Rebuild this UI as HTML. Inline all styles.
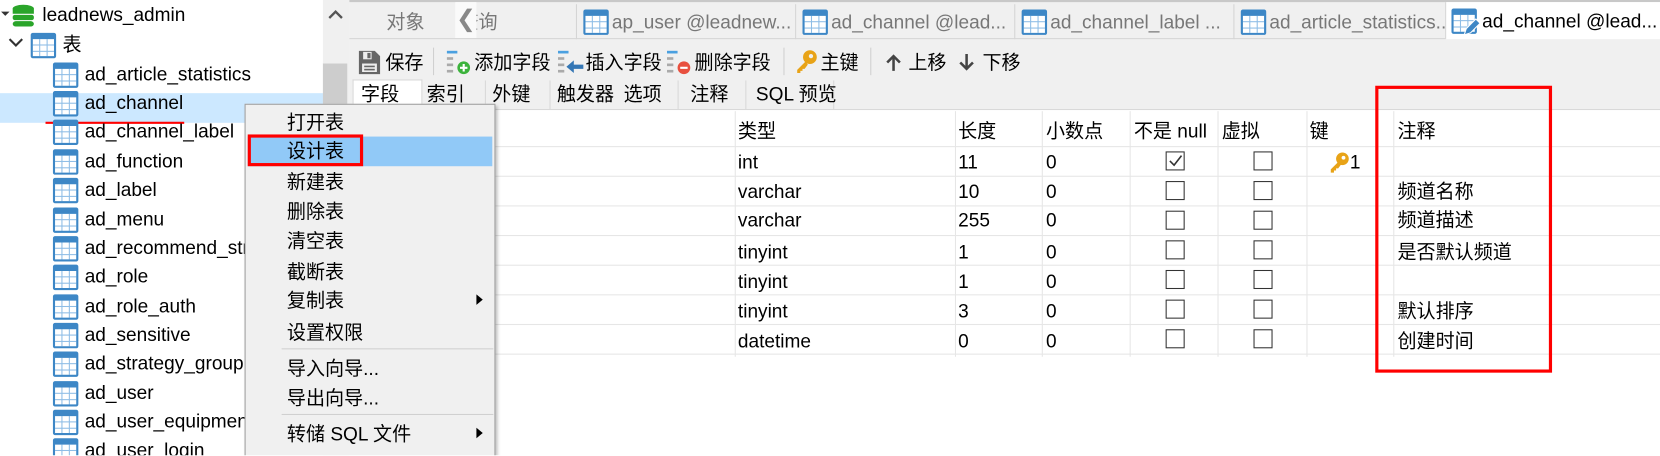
<!DOCTYPE html>
<html><head><meta charset="utf-8">
<style>
*{margin:0;padding:0;box-sizing:border-box}
html,body{width:1660px;height:456px;overflow:hidden;background:#fff}
#w{position:absolute;left:0;top:0;width:1568px;height:430px;transform:scale(1.0587);transform-origin:0 0;font-family:"Liberation Sans","Noto Sans CJK SC",sans-serif;font-size:18px;color:#000;overflow:hidden}
.a{position:absolute;white-space:nowrap}
.t{line-height:20px}
.ti{position:absolute;width:24px;height:24px;border:2px solid #3d87c6;border-top-width:6px;border-radius:2px;background:
linear-gradient(#8ebde6,#8ebde6) 6px 0/1px 100% no-repeat,
linear-gradient(#8ebde6,#8ebde6) 13px 0/1px 100% no-repeat,
linear-gradient(#8ebde6,#8ebde6) 0 5px/100% 1px no-repeat,
linear-gradient(#8ebde6,#8ebde6) 0 11px/100% 1px no-repeat,#fff}
.cb{position:absolute;width:18px;height:18px;border:1.5px solid #333;background:#fff}
.vl{position:absolute;width:1px;background:#e6e6e6;top:105px;height:232px}
.hl{position:absolute;height:1px;background:#e6e6e6;left:333px;right:0}
.mi{position:absolute;left:271px;line-height:20px}
.tab{position:absolute;top:4px;height:33px;border-left:1px solid #d5d5d5;color:#777}
</style></head><body><div id="w">
<div class="a" style="left:0;top:88px;width:322px;height:28px;background:#cce8ff"></div>
<svg class="a" style="left:0;top:3px" width="34" height="24"><path d="M1 8 l4 4 l4-4" fill="#333"/><g fill="#2aa52a"><ellipse cx="22" cy="5" rx="10" ry="3.5"/><rect x="12" y="5" width="20" height="5"/><rect x="12" y="11" width="20" height="5" rx="2"/><rect x="12" y="17" width="20" height="5" rx="3"/></g></svg>
<div class="a t" style="left:40px;top:4px">leadnews_admin</div>
<svg class="a" style="left:8px;top:34px" width="14" height="12"><path d="M1 3 l6 6 l6-6" stroke="#333" stroke-width="2" fill="none"/></svg>
<div class="ti" style="left:29px;top:31px"></div>
<div class="a t" style="left:59px;top:32px">表</div>
<div class="ti" style="left:50px;top:59px"></div><div class="a t" style="left:80px;top:60px">ad_article_statistics</div>
<div class="ti" style="left:50px;top:86px"></div><div class="a t" style="left:80px;top:87px">ad_channel</div>
<div class="a" style="left:43px;top:115px;width:131px;height:2px;background:#f00"></div>
<div class="ti" style="left:50px;top:113px"></div><div class="a t" style="left:80px;top:114px">ad_channel_label</div>
<div class="ti" style="left:50px;top:141px"></div><div class="a t" style="left:80px;top:142px">ad_function</div>
<div class="ti" style="left:50px;top:168px"></div><div class="a t" style="left:80px;top:169px">ad_label</div>
<div class="ti" style="left:50px;top:196px"></div><div class="a t" style="left:80px;top:197px">ad_menu</div>
<div class="ti" style="left:50px;top:223px"></div><div class="a t" style="left:80px;top:224px">ad_recommend_strategy</div>
<div class="ti" style="left:50px;top:250px"></div><div class="a t" style="left:80px;top:251px">ad_role</div>
<div class="ti" style="left:50px;top:278px"></div><div class="a t" style="left:80px;top:279px">ad_role_auth</div>
<div class="ti" style="left:50px;top:305px"></div><div class="a t" style="left:80px;top:306px">ad_sensitive</div>
<div class="ti" style="left:50px;top:332px"></div><div class="a t" style="left:80px;top:333px">ad_strategy_group</div>
<div class="ti" style="left:50px;top:360px"></div><div class="a t" style="left:80px;top:361px">ad_user</div>
<div class="ti" style="left:50px;top:387px"></div><div class="a t" style="left:80px;top:388px">ad_user_equipment</div>
<div class="ti" style="left:50px;top:414px"></div><div class="a t" style="left:80px;top:415px">ad_user_login</div>
<div class="a" style="left:305px;top:0;width:25px;height:430px;background:#f0f0f0"></div>
<svg class="a" style="left:309px;top:8px" width="16" height="12"><path d="M2 9 l6-6 l6 6" stroke="#555" stroke-width="2.2" fill="none"/></svg>
<div class="a" style="left:305px;top:60px;width:23px;height:45px;background:#cdcdcd"></div>
<div class="a" style="left:330px;top:0;width:1330px;height:105px;background:#f0f0f0"></div>
<div class="a" style="left:330px;top:0;width:1330px;height:2px;background:#c8c8c8"></div>
<div class="tab" style="left:330px;width:100px;border-left:none"><span class="a t" style="left:35px;top:7px">对象</span></div>
<div class="a t" style="left:434px;top:11px;color:#777">查询</div>
<div class="a" style="left:430px;top:2px;width:20px;height:34px;background:#fafafa;color:#888;font-size:22px;line-height:32px;text-align:center">❮</div>
<div class="tab" style="left:544px;width:207px"><div class="ti" style="left:6px;top:5px"></div><span class="a t" style="left:33px;top:7px">ap_user @leadnew...</span></div>
<div class="tab" style="left:751px;width:207px"><div class="ti" style="left:6px;top:5px"></div><span class="a t" style="left:33px;top:7px">ad_channel @lead...</span></div>
<div class="tab" style="left:958px;width:207px"><div class="ti" style="left:6px;top:5px"></div><span class="a t" style="left:33px;top:7px">ad_channel_label ...</span></div>
<div class="tab" style="left:1165px;width:200px"><div class="ti" style="left:6px;top:5px"></div><span class="a t" style="left:33px;top:7px">ad_article_statistics...</span></div>
<div class="a" style="left:1365px;top:2px;width:295px;height:35px;background:#fff;border-left:1px solid #d5d5d5"></div>
<div class="ti" style="left:1371px;top:8px"></div>
<svg class="a" style="left:1380px;top:16px" width="20" height="20"><path d="M3 17 l2-6 l9-9 l4 4 l-9 9z" fill="#3d87c6" stroke="#fff"/></svg>
<div class="a t" style="left:1400px;top:10px">ad_channel @lead...</div>
<div class="a" style="left:330px;top:36px;width:1035px;height:1px;background:#d5d5d5"></div>
<svg class="a" style="left:338px;top:47px" width="22" height="24"><path d="M1 1h15l5 5v17H1z" fill="#666"/><rect x="5" y="2" width="8" height="7" fill="#eee"/><rect x="9" y="3" width="3" height="5" fill="#666"/><rect x="4" y="13" width="14" height="8" fill="#eee"/><rect x="6" y="15" width="10" height="1.5" fill="#666"/><rect x="6" y="18" width="10" height="1.5" fill="#666"/></svg>
<div class="a t" style="left:364px;top:49px">保存</div>
<div class="a" style="left:409px;top:45px;width:1px;height:26px;background:#d0d0d0"></div>
<svg class="a" style="left:422px;top:47px" width="26" height="24"><rect x="0" y="1" width="10" height="2.5" fill="#4aa0e0"/><rect x="0" y="7" width="6" height="2.5" fill="#aaa"/><rect x="0" y="13" width="6" height="2.5" fill="#aaa"/><rect x="0" y="19" width="6" height="2.5" fill="#aaa"/><circle cx="16" cy="17" r="6" fill="#3cb33c"/><path d="M12.5 17h7M16 13.5v7" stroke="#fff" stroke-width="2"/></svg>
<div class="a t" style="left:448px;top:49px">添加字段</div>
<svg class="a" style="left:527px;top:47px" width="26" height="24"><rect x="0" y="1" width="10" height="2.5" fill="#4aa0e0"/><rect x="0" y="7" width="6" height="2.5" fill="#aaa"/><rect x="0" y="13" width="6" height="2.5" fill="#aaa"/><rect x="0" y="19" width="6" height="2.5" fill="#aaa"/><path d="M8 16 l7-6 v4 h9 v4 h-9 v4z" fill="#3577b5"/></svg>
<div class="a t" style="left:553px;top:49px">插入字段</div>
<svg class="a" style="left:630px;top:47px" width="26" height="24"><rect x="0" y="1" width="10" height="2.5" fill="#4aa0e0"/><rect x="0" y="7" width="6" height="2.5" fill="#aaa"/><rect x="0" y="13" width="6" height="2.5" fill="#aaa"/><rect x="0" y="19" width="6" height="2.5" fill="#aaa"/><circle cx="16" cy="17" r="6" fill="#e8503f"/><path d="M12.5 17h7" stroke="#fff" stroke-width="2"/></svg>
<div class="a t" style="left:656px;top:49px">删除字段</div>
<div class="a" style="left:740px;top:45px;width:1px;height:26px;background:#d0d0d0"></div>
<svg class="a" style="left:751px;top:46px" width="22" height="24"><circle cx="14" cy="8" r="6.5" fill="#e8a317"/><circle cx="15" cy="7" r="2" fill="#f0f0f0"/><path d="M10 12 l-8 8 v3 h3 v-2 h2 v-2 h2 l3-4z" fill="#e8a317"/></svg>
<div class="a t" style="left:775px;top:49px">主键</div>
<div class="a" style="left:822px;top:45px;width:1px;height:26px;background:#d0d0d0"></div>
<svg class="a" style="left:836px;top:50px" width="16" height="18"><path d="M8 17V3M2 9l6-6 6 6" stroke="#444" stroke-width="2.4" fill="none"/></svg>
<div class="a t" style="left:858px;top:49px">上移</div>
<svg class="a" style="left:905px;top:50px" width="16" height="18"><path d="M8 1v14M2 9l6 6 6-6" stroke="#444" stroke-width="2.4" fill="none"/></svg>
<div class="a t" style="left:928px;top:49px">下移</div>
<div class="a" style="left:333px;top:75px;width:66px;height:30px;background:#fff;border:1px solid #d8d8d8;border-bottom:none"></div>
<div class="a t" style="left:341px;top:79px">字段</div>
<div class="a" style="left:458px;top:76px;width:1px;height:27px;background:#d8d8d8"></div>
<div class="a" style="left:519px;top:76px;width:1px;height:27px;background:#d8d8d8"></div>
<div class="a" style="left:640px;top:76px;width:1px;height:27px;background:#d8d8d8"></div>
<div class="a" style="left:704px;top:76px;width:1px;height:27px;background:#d8d8d8"></div>
<div class="a" style="left:787px;top:76px;width:1px;height:27px;background:#d8d8d8"></div>
<div class="a t" style="left:403px;top:79px">索引</div>
<div class="a t" style="left:465px;top:79px">外键</div>
<div class="a t" style="left:526px;top:79px">触发器</div>
<div class="a t" style="left:589px;top:79px">选项</div>
<div class="a t" style="left:652px;top:79px">注释</div>
<div class="a t" style="left:714px;top:79px">SQL 预览</div>
<div class="a" style="left:330px;top:103px;width:1330px;height:1px;background:#d8d8d8"></div>
<div class="a" style="left:330px;top:104px;width:1330px;height:326px;background:#fff"></div>
<div class="hl" style="top:138px"></div><div class="hl" style="top:166px"></div><div class="hl" style="top:194px"></div><div class="hl" style="top:222px"></div><div class="hl" style="top:250px"></div><div class="hl" style="top:278px"></div><div class="hl" style="top:306px"></div><div class="hl" style="top:334px"></div>
<div class="vl" style="left:694px"></div><div class="vl" style="left:902px"></div><div class="vl" style="left:984px"></div><div class="vl" style="left:1067px"></div><div class="vl" style="left:1150px"></div><div class="vl" style="left:1234px"></div><div class="vl" style="left:1316px"></div>
<div class="a t" style="left:697px;top:114px">类型</div>
<div class="a t" style="left:905px;top:114px">长度</div>
<div class="a t" style="left:988px;top:114px">小数点</div>
<div class="a t" style="left:1071px;top:114px">不是 null</div>
<div class="a t" style="left:1154px;top:114px">虚拟</div>
<div class="a t" style="left:1237px;top:114px">键</div>
<div class="a t" style="left:1320px;top:114px">注释</div>
<div class="a t" style="left:697px;top:143px">int</div><div class="a t" style="left:905px;top:143px">11</div><div class="a t" style="left:988px;top:143px">0</div>
<div class="a t" style="left:697px;top:171px">varchar</div><div class="a t" style="left:905px;top:171px">10</div><div class="a t" style="left:988px;top:171px">0</div>
<div class="a t" style="left:697px;top:198px">varchar</div><div class="a t" style="left:905px;top:198px">255</div><div class="a t" style="left:988px;top:198px">0</div>
<div class="a t" style="left:697px;top:228px">tinyint</div><div class="a t" style="left:905px;top:228px">1</div><div class="a t" style="left:988px;top:228px">0</div>
<div class="a t" style="left:697px;top:256px">tinyint</div><div class="a t" style="left:905px;top:256px">1</div><div class="a t" style="left:988px;top:256px">0</div>
<div class="a t" style="left:697px;top:284px">tinyint</div><div class="a t" style="left:905px;top:284px">3</div><div class="a t" style="left:988px;top:284px">0</div>
<div class="a t" style="left:697px;top:312px">datetime</div><div class="a t" style="left:905px;top:312px">0</div><div class="a t" style="left:988px;top:312px">0</div>
<div class="cb" style="left:1101px;top:143px"></div>
<svg class="a" style="left:1104px;top:146px" width="13" height="12"><path d="M1 6l4 4 7-9" stroke="#333" stroke-width="1.5" fill="none"/></svg>
<div class="cb" style="left:1101px;top:171px"></div><div class="cb" style="left:1101px;top:199px"></div><div class="cb" style="left:1101px;top:227px"></div><div class="cb" style="left:1101px;top:255px"></div><div class="cb" style="left:1101px;top:283px"></div><div class="cb" style="left:1101px;top:311px"></div>
<div class="cb" style="left:1184px;top:143px"></div><div class="cb" style="left:1184px;top:171px"></div><div class="cb" style="left:1184px;top:199px"></div><div class="cb" style="left:1184px;top:227px"></div><div class="cb" style="left:1184px;top:255px"></div><div class="cb" style="left:1184px;top:283px"></div><div class="cb" style="left:1184px;top:311px"></div>
<svg class="a" style="left:1254px;top:142px" width="22" height="22"><circle cx="14" cy="8" r="6" fill="#e8a317"/><circle cx="15" cy="7" r="1.8" fill="#fff"/><path d="M10 11 l-7 7 v3 h3 v-2 h2 v-2 h2 l3-4z" fill="#e8a317"/></svg>
<div class="a t" style="left:1275px;top:143px">1</div>
<div class="a t" style="left:1320px;top:171px">频道名称</div>
<div class="a t" style="left:1320px;top:198px">频道描述</div>
<div class="a t" style="left:1320px;top:228px">是否默认频道</div>
<div class="a t" style="left:1320px;top:284px">默认排序</div>
<div class="a t" style="left:1320px;top:312px">创建时间</div>
<div class="a" style="left:1299px;top:81px;width:167px;height:271px;border:3px solid #f00"></div>
<div class="a" style="left:231px;top:98px;width:237px;height:340px;background:#f0f0f0;border:1px solid #a0a0a0;box-shadow:2px 2px 3px rgba(0,0,0,.25)"></div>
<div class="a" style="left:234px;top:129px;width:231px;height:28px;background:#91c9f7"></div>
<div class="a" style="left:234px;top:127px;width:109px;height:30px;border:3px solid #f00"></div>
<div class="mi" style="top:106px">打开表</div>
<div class="mi" style="top:133px">设计表</div>
<div class="mi" style="top:162px">新建表</div>
<div class="mi" style="top:190px">删除表</div>
<div class="mi" style="top:218px">清空表</div>
<div class="mi" style="top:247px">截断表</div>
<div class="mi" style="top:274px">复制表</div>
<div class="mi" style="top:304px">设置权限</div>
<div class="a" style="left:266px;top:329px;width:200px;height:1px;background:#d0d0d0"></div>
<div class="mi" style="top:338px">导入向导...</div>
<div class="mi" style="top:366px">导出向导...</div>
<div class="a" style="left:266px;top:391px;width:200px;height:1px;background:#d0d0d0"></div>
<div class="mi" style="top:400px">转储 SQL 文件</div>
<svg class="a" style="left:449px;top:277px" width="8" height="12"><path d="M1 1l6 5-6 5z" fill="#000"/></svg>
<svg class="a" style="left:449px;top:403px" width="8" height="12"><path d="M1 1l6 5-6 5z" fill="#000"/></svg>
</div></body></html>
